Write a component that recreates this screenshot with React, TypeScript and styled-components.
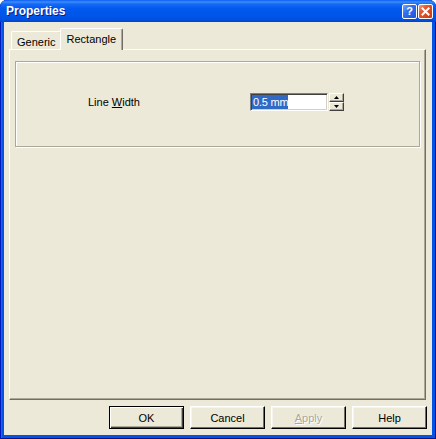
import * as React from 'react'
import styled, { createGlobalStyle } from 'styled-components'

const GlobalStyle = createGlobalStyle`
    html, body {
        margin: 0;
        padding: 0;
        background: #ffffff;
    }
    body {
        font-family: "Liberation Sans", Arial, sans-serif;
        font-size: 11px;
    }
`

const Window = styled.div`
    width: 436px;
    height: 439px;
    display: flex;
    flex-direction: column;
    background: #0553e3;
    border-radius: 7px 7px 0 0;
    box-shadow: inset 1px 0 0 #0019b8, inset -1px 0 0 #00138c, inset 0 -1px 0 #00138c, inset 2px 0 0 #1c67f0;
    overflow: hidden;
`

const TitleBar = styled.div`
    height: 22px;
    flex: none;
    display: flex;
    align-items: center;
    justify-content: space-between;
    padding: 0 3px 0 6px;
    box-sizing: border-box;
    background: linear-gradient(to bottom, #0a5cf0 0%, #3d8dfb 9%, #1669f5 18%, #0058ee 40%, #0055ea 70%, #0050e0 90%, #0042c8 100%);
`

const Title = styled.span`
    color: #ffffff;
    font-weight: bold;
    font-size: 12px;
    text-shadow: 1px 1px 0 #0a1a8a;
`

const CaptionButtons = styled.div`
    display: flex;
    gap: 1px;
`

const CaptionButton = styled.div<{ $close?: boolean }>`
    width: 15px;
    height: 15px;
    box-sizing: border-box;
    border: 1px solid #ffffff;
    border-radius: 2px;
    display: flex;
    align-items: center;
    justify-content: center;
    color: #ffffff;
    font-weight: bold;
    font-size: 11px;
    background: ${p => p.$close
        ? 'linear-gradient(135deg, #f0a08a 0%, #e2562e 35%, #cc3a12 100%)'
        : 'linear-gradient(135deg, #7aa6f8 0%, #2f6ff0 40%, #1a55d8 100%)'};
`

const Client = styled.div`
    flex: 1;
    margin: 0 4px 4px 4px;
    background: #ece9d8;
    display: flex;
    flex-direction: column;
    padding-top: 6px;
    box-sizing: border-box;
`

const TabStrip = styled.div`
    height: 21px;
    display: flex;
    align-items: flex-end;
    margin-left: 5px;
    padding-left: 2px;
`

const Tab = styled.div<{ $active?: boolean }>`
    position: relative;
    z-index: ${p => (p.$active ? 1 : 0)};
    height: ${p => (p.$active ? 22 : 18)}px;
    margin-bottom: ${p => (p.$active ? -1 : 0)}px;
    margin-left: ${p => (p.$active ? -2 : 0)}px;
    padding: ${p => (p.$active ? '4px 6px 0 6px' : '4px 5px 0 5px')};
    box-sizing: border-box;
    background: #ece9d8;
    border-top: 1px solid #ffffff;
    border-left: 1px solid #ffffff;
    border-right: 1px solid #716f64;
    border-radius: 2px 2px 0 0;
    box-shadow: inset -1px 0 0 #aca899;
    color: #000000;
    line-height: 12px;
    white-space: nowrap;
`

const Panel = styled.div`
    height: 351px;
    margin: 0 6px 0 5px;
    box-sizing: border-box;
    border-top: 1px solid #ffffff;
    border-left: 1px solid #ffffff;
    border-right: 1px solid #716f64;
    border-bottom: 1px solid #716f64;
    box-shadow: inset -1px -1px 0 #aca899;
    padding: 11px 0 0 5px;
`

const GroupBox = styled.div`
    width: 405px;
    height: 86px;
    box-sizing: border-box;
    border: 1px solid #aca899;
    box-shadow: inset 1px 1px 0 #ffffff, 1px 1px 0 #ffffff;
    padding: 31px 0 0 72px;
`

const FieldRow = styled.div`
    display: grid;
    grid-template-columns: 162px auto;
    align-items: center;
`

const Label = styled.span`
    color: #000000;
`

const SpinBox = styled.div`
    display: flex;
    gap: 1px;
`

const TextField = styled.div`
    width: 78px;
    height: 18px;
    box-sizing: border-box;
    background: #ffffff;
    border-top: 1px solid #808080;
    border-left: 1px solid #808080;
    border-right: 1px solid #ffffff;
    border-bottom: 1px solid #ffffff;
    box-shadow: inset 1px 1px 0 #404040, inset -1px -1px 0 #d4d0c8;
    padding: 1px 0 0 1px;
    display: flex;
`

const Selection = styled.span`
    background: #316ac5;
    color: #ffffff;
    height: 14px;
    line-height: 14px;
    padding: 0 0 0 1px;
    letter-spacing: -0.2px;
`

const SpinButtons = styled.div`
    display: flex;
    flex-direction: column;
    width: 15px;
    height: 18px;
`

const SpinButton = styled.div`
    flex: 1;
    box-sizing: border-box;
    background: #ece9d8;
    border-top: 1px solid #ffffff;
    border-left: 1px solid #ffffff;
    border-right: 1px solid #404040;
    border-bottom: 1px solid #404040;
    box-shadow: inset -1px -1px 0 #aca899;
    display: flex;
    align-items: center;
    justify-content: center;
`

const ButtonRow = styled.div`
    display: flex;
    justify-content: flex-end;
    gap: 6px;
    margin-top: 6px;
    padding-right: 5px;
`

const Button = styled.div<{ $default?: boolean; $disabled?: boolean }>`
    width: 75px;
    height: 23px;
    box-sizing: border-box;
    display: flex;
    align-items: center;
    justify-content: center;
    background: #ece9d8;
    border: 1px solid ${p => (p.$default ? '#000000' : 'transparent')};
    border-top-color: ${p => (p.$default ? '#000000' : '#ffffff')};
    border-left-color: ${p => (p.$default ? '#000000' : '#ffffff')};
    border-right-color: #000000;
    border-bottom-color: #000000;
    box-shadow: ${p => p.$default
        ? 'inset 1px 1px 0 #ffffff, inset -1px -1px 0 #404040, inset -2px -2px 0 #aca899'
        : 'inset -1px -1px 0 #716f64, inset 1px 1px 0 #f5f4ee'};
    color: ${p => (p.$disabled ? '#aca899' : '#000000')};
    text-shadow: ${p => (p.$disabled ? '1px 1px 0 #ffffff' : 'none')};
`

const Arrow = ({ up }: { up?: boolean }) => (
    <svg width="5" height="3" viewBox="0 0 5 3">
        <path d={up ? 'M2.5 0 L5 3 L0 3 Z' : 'M0 0 L5 0 L2.5 3 Z'} fill="#000" />
    </svg>
)

const App: React.FC = () => {
    return (
        <>
            <GlobalStyle />
            <Window>
                <TitleBar>
                    <Title>Properties</Title>
                    <CaptionButtons>
                        <CaptionButton>?</CaptionButton>
                        <CaptionButton $close>
                            <svg width="9" height="9" viewBox="0 0 9 9">
                                <path d="M1.5 1.5 L7.5 7.5 M7.5 1.5 L1.5 7.5" stroke="#fff" strokeWidth="2" strokeLinecap="square" />
                            </svg>
                        </CaptionButton>
                    </CaptionButtons>
                </TitleBar>
                <Client>
                    <TabStrip>
                        <Tab>Generic</Tab>
                        <Tab $active>Rectangle</Tab>
                    </TabStrip>
                    <Panel>
                        <GroupBox>
                            <FieldRow>
                                <Label>Line <u>W</u>idth</Label>
                                <SpinBox>
                                    <TextField>
                                        <Selection>0.5 mm</Selection>
                                    </TextField>
                                    <SpinButtons>
                                        <SpinButton><Arrow up /></SpinButton>
                                        <SpinButton><Arrow /></SpinButton>
                                    </SpinButtons>
                                </SpinBox>
                            </FieldRow>
                        </GroupBox>
                    </Panel>
                    <ButtonRow>
                        <Button $default>OK</Button>
                        <Button>Cancel</Button>
                        <Button $disabled><span><u>A</u>pply</span></Button>
                        <Button>Help</Button>
                    </ButtonRow>
                </Client>
            </Window>
        </>
    )
}

export default App
